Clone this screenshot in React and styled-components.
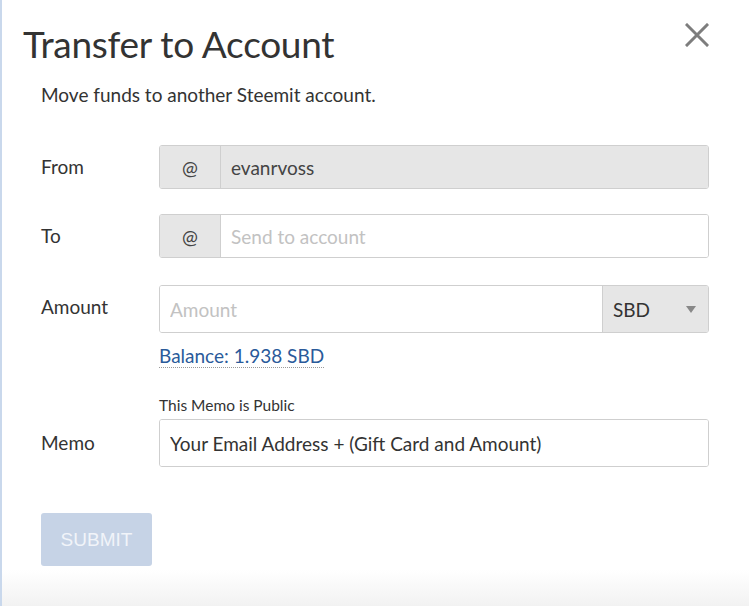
import React from 'react'
import styled, { createGlobalStyle } from 'styled-components'

const GlobalStyle = createGlobalStyle`
    html, body {
        margin: 0;
        padding: 0;
        background: #fff;
    }
    body {
        font-family: Lato, "Open Sans", sans-serif;
        color: #333;
    }
`

function App() {
    return (
        <>
            <GlobalStyle />
            <ModalStyled>
                <Header>
                    <h2>Transfer to Account</h2>
                    <CloseButton aria-label='Close'>
                        <svg width='24' height='24' viewBox='0 0 24 24'>
                            <path d='M2 2 L22 22 M22 2 L2 22' stroke='#7d7d7d' strokeWidth='3' strokeLinecap='square' />
                        </svg>
                    </CloseButton>
                </Header>
                <Intro>Move funds to another Steemit account.</Intro>

                <Row $top={38}>
                    <Label>From</Label>
                    <Group>
                        <Addon>@</Addon>
                        <Input $disabled value='evanrvoss' readOnly />
                    </Group>
                </Row>

                <Row $top={25}>
                    <Label>To</Label>
                    <Group>
                        <Addon>@</Addon>
                        <Input placeholder='Send to account' />
                    </Group>
                </Row>

                <Row $top={27}>
                    <Label>Amount</Label>
                    <div>
                        <Group $tall>
                            <Input placeholder='Amount' />
                            <Select>
                                <span>SBD</span>
                                <Caret />
                            </Select>
                        </Group>
                        <Balance>Balance: 1.938 SBD</Balance>
                    </div>
                </Row>

                <Row $top={28} $align='end'>
                    <Label $pad>Memo</Label>
                    <div>
                        <Hint>This Memo is Public</Hint>
                        <Group $tall>
                            <Input $dark value='Your Email Address + (Gift Card and Amount)' readOnly />
                        </Group>
                    </div>
                </Row>

                <Submit disabled>Submit</Submit>
            </ModalStyled>
        </>
    )
}

const ModalStyled = styled.div`
    position: relative;
    box-sizing: border-box;
    min-height: 606px;
    padding: 0 40px 0 39px;
    border-left: 2px solid #c9d8ec;
    background: linear-gradient(to bottom, #fff 0, #fff 570px, #f2f2f2 606px);
`

const Header = styled.div`
    display: flex;
    justify-content: space-between;
    align-items: flex-start;
    margin-left: -18px;
    padding-top: 20px;
    h2 {
        margin: 0;
        font-size: 37px;
        font-weight: 400;
        line-height: 48px;
        color: #333;
        letter-spacing: -0.3px;
    }
`

const CloseButton = styled.button`
    border: 0;
    background: none;
    padding: 0;
    margin: 3px 0 0 0;
    cursor: pointer;
    line-height: 0;
`

const Intro = styled.p`
    margin: 15px 0 0 0;
    font-size: 19px;
    line-height: 24px;
`

const Row = styled.div`
    display: grid;
    grid-template-columns: 118px 550px;
    align-items: ${p => (p.$align === 'end' ? 'end' : 'start')};
    margin-top: ${p => p.$top}px;
`

const Label = styled.div`
    font-size: 19px;
    line-height: 44px;
    padding-bottom: ${p => (p.$pad ? '2px' : '0')};
`

const Group = styled.div`
    display: flex;
    height: ${p => (p.$tall ? '48px' : '44px')};
    box-sizing: border-box;
    border: 1px solid #cfcfcf;
    border-radius: 3px;
    overflow: hidden;
`

const Addon = styled.div`
    width: 60px;
    flex: none;
    display: flex;
    align-items: center;
    justify-content: center;
    background: #e6e6e6;
    border-right: 1px solid #cfcfcf;
    font-size: 19px;
    color: #444;
`

const Input = styled.input`
    flex: 1;
    min-width: 0;
    border: 0;
    outline: none;
    padding: 0 10px;
    font-family: Lato, "Open Sans", sans-serif;
    font-size: 19px;
    color: ${p => (p.$dark ? '#333' : '#444')};
    background: ${p => (p.$disabled ? '#e6e6e6' : '#fff')};
    &::placeholder {
        color: #c2c2c2;
    }
`

const Select = styled.div`
    width: 106px;
    flex: none;
    box-sizing: border-box;
    display: flex;
    align-items: center;
    justify-content: space-between;
    padding: 0 12px 0 10px;
    background: #e6e6e6;
    border-left: 1px solid #cfcfcf;
    font-size: 19px;
    color: #333;
`

const Caret = styled.span`
    width: 0;
    height: 0;
    border-left: 5px solid transparent;
    border-right: 5px solid transparent;
    border-top: 7px solid #888;
`

const Balance = styled.a`
    display: inline-block;
    margin-top: 12px;
    font-size: 19px;
    line-height: 22px;
    color: #2a5a9a;
    border-bottom: 1px dotted #999;
    cursor: pointer;
`

const Hint = styled.div`
    font-size: 15.5px;
    line-height: 18px;
    margin-bottom: 5px;
    color: #333;
`

const Submit = styled.button`
    display: block;
    margin-top: 46px;
    width: 111px;
    height: 53px;
    border: 0;
    border-radius: 3px;
    background: #c6d3e6;
    color: #f1f4f9;
    font-family: "Liberation Sans", Arial, sans-serif;
    font-size: 19px;
    text-transform: uppercase;
`

export default App
